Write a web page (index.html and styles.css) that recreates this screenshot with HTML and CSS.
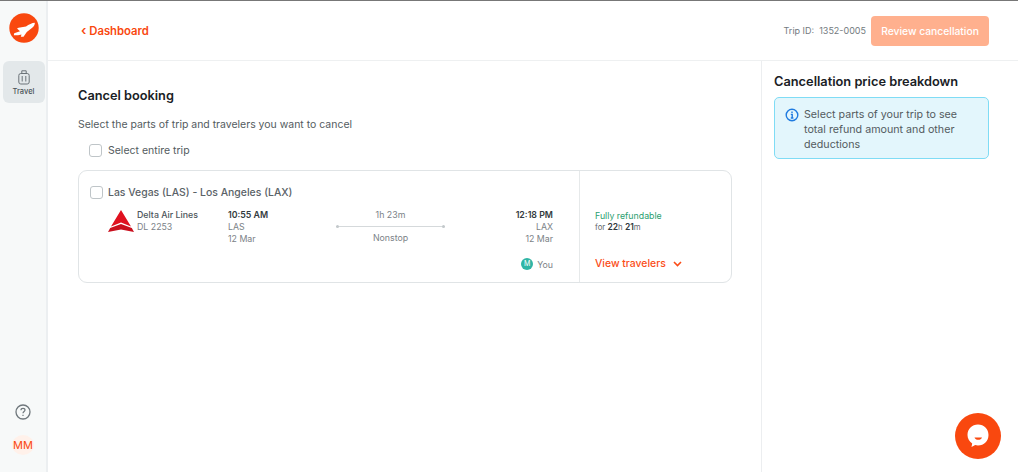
FILE: index.html
```html
<!DOCTYPE html>
<html lang="en">
<head>
<meta charset="utf-8">
<title>Cancel booking</title>
<link rel="stylesheet" href="styles.css">
</head>
<body>
<div class="frame">
  <aside class="sidebar">
    <svg class="logo" width="30" height="30" viewBox="0 0 30 30">
      <circle cx="15" cy="15" r="14.7" fill="#f9480f"/>
      <path d="M25.800 9.800C23 9.800 20 11.600 17 13.400L9.500 14.800L8 15.600L11 18.200L5.200 20.200L4.800 22.300C7.500 22.400 10 22 12.500 21.400L11.800 23.800L14.500 23.800L17.800 19L23.500 14.500C25 13.200 26 11.400 25.800 9.800Z" fill="#fff"/>
    </svg>
    <div class="nav-item">
      <svg width="12" height="15" viewBox="0 0 12 15" fill="none" stroke="#6b7378" stroke-width="1">
        <rect x="0.800" y="3.500" width="10.400" height="10.500" rx="2"/>
        <path d="M3.800 3.500V0.800H8.200V3.500M4.200 6V11.500M7.800 6V11.500"/>
      </svg>
      <span>Travel</span>
    </div>
    <div class="side-foot">
      <svg width="16" height="16" viewBox="0 0 16 16" fill="none" stroke="#6f777c" stroke-width="1.3">
        <circle cx="8" cy="8" r="7"/>
        <path d="M6 6.200C6 5 7 4.400 8 4.400C9.100 4.400 10 5.100 10 6.100C10 7.500 8 7.500 8 9.200M8 10.700V12" stroke-width="1.200"/>
      </svg>
      <div class="avatar">MM</div>
    </div>
  </aside>
  <div class="page">
    <header class="topbar">
      <a class="back"><span class="back-mark">‹</span> Dashboard</a>
      <div class="top-right">
        <span class="trip-id">Trip ID:&nbsp; 1352-0005</span>
        <button class="review">Review cancellation</button>
      </div>
    </header>
    <div class="content">
      <main class="booking">
        <h1>Cancel booking</h1>
        <p class="lead">Select the parts of trip and travelers you want to cancel</p>
        <label class="entire"><span class="check"></span>Select entire trip</label>
        <section class="card">
          <div class="card-main">
            <div class="route"><span class="check"></span>Las Vegas (LAS) - Los Angeles (LAX)</div>
            <div class="flight">
              <svg class="delta" width="26" height="22" viewBox="0 0 26 22">
                <path d="M13 0L23 16.500L13 12.500L3 16.500Z" fill="#e0111f"/>
                <path d="M2.200 18L13 14L23.800 18L26 22L13 19.500L0 22Z" fill="#c90f1d"/>
              </svg>
              <div class="carrier"><strong>Delta Air Lines</strong><span>DL 2253</span></div>
              <div class="depart"><strong>10:55 AM</strong><span>LAS</span><span>12 Mar</span></div>
              <div class="path">
                <span>1h 23m</span>
                <i class="line"></i>
                <span>Nonstop</span>
              </div>
              <div class="arrive"><strong>12:18 PM</strong><span>LAX</span><span>12 Mar</span></div>
            </div>
            <div class="who"><span class="dot">M</span>You</div>
          </div>
          <div class="card-side">
            <div class="refund">
              <div class="green">Fully refundable</div>
              <div class="for">for <b>22</b>h <b>21</b>m</div>
            </div>
            <a class="travelers">View travelers
              <svg width="9" height="6" viewBox="0 0 9 6" fill="none" stroke="#fb4c17" stroke-width="1.600"><path d="M1 1L4.500 4.500L8 1"/></svg>
            </a>
          </div>
        </section>
      </main>
      <aside class="summary">
        <h2>Cancellation price breakdown</h2>
        <div class="notice">
          <svg width="14" height="14" viewBox="0 0 14 14" fill="none" stroke="#1f7be0" stroke-width="1.400">
            <circle cx="7" cy="7" r="5.800"/>
            <path d="M5.800 6.400H7.200V10M5.800 10H8.400M7 3.600V5"/>
          </svg>
          <p>Select parts of your trip to see total refund amount and other deductions</p>
        </div>
      </aside>
    </div>
  </div>
</div>
<button class="chat" aria-label="Chat">
  <svg width="26" height="28" viewBox="0 0 26 28">
    <path d="M13 2.500C19 2.500 23.500 7 23.500 13C23.500 19 19 23.500 13 23.500C12 23.500 11 23.400 10.200 23.100L6.500 25L7.200 21.500C4.300 19.500 2.500 16.500 2.500 13C2.500 7 7 2.500 13 2.500Z" fill="#fff"/>
    <path d="M9.500 15.500H17C16.500 17.200 15 17.800 13.200 17.800C11.500 17.800 10 17.200 9.500 15.500Z" fill="#f9480f"/>
  </svg>
</button>
</body>
</html>
```
FILE: styles.css
```css
* { box-sizing: border-box; }
html, body { margin: 0; height: 100%; }
body {
  background: #fff;
  overflow: hidden;
  font-family: Inter, "Liberation Sans", sans-serif;
  color: #5f676c;
}
.frame {
  width: 1018px;
  height: 472px;
  border-top: 1.500px solid #777;
  display: flex;
}
.sidebar {
  width: 48px;
  flex: none;
  background: #f7f9f9;
  border-right: 2px solid #eceff1;
  display: flex;
  flex-direction: column;
  align-items: center;
  padding-top: 12px;
}
.logo { margin-bottom: 18px; margin-left: 1px; }
.nav-item {
  width: 42px;
  height: 42px;
  margin-left: 1px;
  border-radius: 6px;
  background: #e3e8ea;
  display: flex;
  flex-direction: column;
  align-items: center;
  padding-top: 9px;
  gap: 2px;
  font-size: 7.500px;
  font-weight: 500;
  color: #4a5358;
}
.side-foot {
  margin-top: auto;
  padding-bottom: 17px;
  display: flex;
  flex-direction: column;
  align-items: center;
  gap: 15px;
}
.avatar {
  width: 22px;
  height: 20px;
  border-radius: 50%;
  background: #fff1ea;
  color: #f9480f;
  font-size: 11px;
  font-weight: 400;
  line-height: 20px;
  text-align: center;
}
.page { flex: 1; display: flex; flex-direction: column; min-width: 0; }
.topbar {
  height: 60px;
  flex: none;
  border-bottom: 1px solid #eef0f1;
  display: flex;
  align-items: center;
  justify-content: space-between;
  padding: 0 29px 1px 33px;
}
.back { color: #f9480f; font-size: 11.300px; font-weight: 600; }
.back-mark { font-size: 13px; }
.top-right { display: flex; align-items: center; gap: 5px; }
.trip-id { font-size: 9px; color: #747b80; }
.review {
  width: 118px;
  height: 30px;
  margin-top: 1px;
  border: 0;
  border-radius: 4px;
  background: #ffb08e;
  color: #fff;
  font: 500 10.300px Inter, "Liberation Sans", sans-serif;
}
.content { flex: 1; display: flex; min-height: 0; }
.booking { width: 713px; flex: none; padding: 27px 30px 0 30px; }
h1 { margin: 0; font-size: 12.750px; line-height: 16px; font-weight: 600; color: #1a2125; }
.lead { margin: 14px 0 0; font-size: 10.470px; line-height: 14px; color: #535b60; }
.check {
  width: 13px;
  height: 13px;
  flex: none;
  background: #fff;
  border: 1px solid #bfc5c8;
  border-radius: 3px;
}
.entire {
  display: flex;
  align-items: center;
  gap: 6px;
  margin: 11px 0 0 11px;
  height: 14px;
  font-size: 10.500px;
  color: #535b60;
}
.card {
  margin-top: 13px;
  width: 654px;
  height: 113px;
  border: 1px solid #e0e4e6;
  border-radius: 9px;
  display: flex;
}
.card-main {
  width: 501px;
  flex: none;
  border-right: 1px solid #e6e9ea;
  padding: 14px 26px 0 11px;
}
.route {
  display: flex;
  align-items: center;
  gap: 5px;
  height: 14px;
  font-size: 10.450px;
  font-weight: 500;
  color: #5a6267;
}
.flight {
  display: flex;
  margin: 10px 0 0 18px;
  font-size: 8.800px;
  line-height: 12px;
  color: #7b8287;
}
.flight strong { display: block; font-weight: 500; color: #4c5459; }
.flight span { display: block; }
.delta { margin-top: 1px; flex: none; }
.carrier { width: 91px; margin-left: 3px; }
.depart { width: 70px; }
.depart strong, .arrive strong { color: #333b40; font-weight: 600; }
.path { width: 109px; margin-left: 38px; text-align: center; }
.line {
  display: block;
  position: relative;
  height: 1px;
  background: #d5d9db;
  margin: 5px 0 5px;
}
.line::before, .line::after {
  content: "";
  position: absolute;
  top: -1px;
  width: 3px;
  height: 3px;
  border-radius: 50%;
  background: #c3c8cb;
}
.line::before { left: 0; }
.line::after { right: 0; }
.arrive { flex: 1; text-align: right; }
.who {
  display: flex;
  justify-content: flex-end;
  align-items: center;
  gap: 4px;
  margin-top: 13px;
  font-size: 8.800px;
  color: #7b8287;
}
.dot {
  width: 12px;
  height: 12px;
  border-radius: 50%;
  background: #30b5a5;
  color: #fff;
  font-size: 7px;
  line-height: 12px;
  text-align: center;
}
.card-side {
  flex: 1;
  padding: 39px 0 0 15px;
  display: flex;
  flex-direction: column;
}
.green { font-size: 8.800px; line-height: 12px; color: #2aa06f; }
.for { font-size: 7.800px; line-height: 11px; color: #5f676c; }
.for b { font-weight: 600; color: #2f373c; font-size: 8.500px; }
.travelers {
  margin-top: 24px;
  display: flex;
  align-items: center;
  gap: 7px;
  font-size: 10.400px;
  font-weight: 500;
  color: #fb4c17;
}
.summary {
  flex: 1;
  border-left: 1.500px solid #eceef0;
  padding: 13px 29px 0 12px;
}
h2 { margin: 0; font-size: 12.800px; line-height: 15px; font-weight: 600; color: #1a2125; }
.notice {
  margin-top: 8px;
  height: 62px;
  border: 1px solid #7fdcf5;
  border-radius: 5px;
  background: #e3f6fc;
  display: flex;
  gap: 5px;
  padding: 9px 20px 9px 10px;
}
.notice svg { flex: none; margin-top: 1px; }
.notice p { margin: 0; font-size: 10.700px; line-height: 15px; color: #535b60; }
.chat {
  position: absolute;
  left: 955px;
  top: 413px;
  width: 46px;
  height: 46px;
  border: 0;
  border-radius: 50%;
  padding: 0;
  background: #f9480f;
  display: flex;
  align-items: center;
  justify-content: center;
}
```
